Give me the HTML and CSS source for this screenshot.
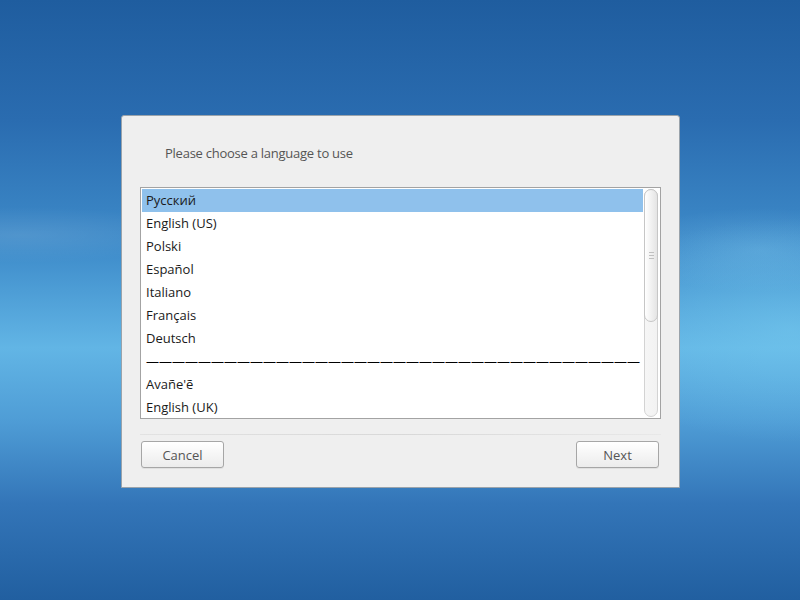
FILE: index.html
```html
<!DOCTYPE html>
<html lang="en">
<head>
  <meta charset="UTF-8">
  <title>Language</title>
  <link rel="stylesheet" href="styles.css">
</head>
<body>

<div class="desktop">
  <div class="dialog">
    <p class="prompt">Please choose a language to use</p>

    <div class="listbox">
      <ul class="items">
        <li class="selected">Русский</li>
        <li>English (US)</li>
        <li>Polski</li>
        <li>Español</li>
        <li>Italiano</li>
        <li>Français</li>
        <li>Deutsch</li>
        <li class="divider">——————————————————————————————————————</li>
        <li>Avañe'ẽ</li>
        <li>English (UK)</li>
      </ul>
      <div class="scrollbar">
        <div class="thumb"><span class="grip"></span></div>
      </div>
    </div>

    <div class="separator"></div>

    <div class="buttons">
      <button class="btn">Cancel</button>
      <button class="btn">Next</button>
    </div>
  </div>
</div>

</body>
</html>
```

FILE: styles.css
```css
/* desktop */
body {
  margin: 0;
  font-family: "Open Sans", "DejaVu Sans", sans-serif;
  font-size: 13px;
}

.desktop {
  width: 800px;
  height: 600px;
  overflow: hidden;
  display: flex;
  align-items: flex-start;
  background:
    radial-gradient(ellipse 260px 40px at 20px 235px, rgba(255, 255, 255, 0.10), transparent 70%),
    radial-gradient(ellipse 300px 160px at 790px 330px, rgba(120, 205, 240, 0.5), transparent 70%),
    radial-gradient(ellipse 200px 60px at 760px 250px, rgba(150, 215, 245, 0.25), transparent 70%),
    linear-gradient(180deg, #1f5d9f 0%, #2a6cb0 20%, #3f8dcb 42%, #62b5e5 58%, #4f9dd6 70%, #3375b8 84%, #215fa0 100%);
}

/* dialog window */
.dialog {
  margin: 115px 0 0 121px;
  width: 559px;
  height: 373px;
  background-color: #efefef;
  border: 1px solid #9aa3ab;
  border-radius: 3px 3px 0 0;
  box-sizing: border-box;
  padding: 0 18px;
}

.prompt {
  margin: 28px 0 0 25px;
  height: 18px;
  line-height: 18px;
  color: #555;
  letter-spacing: -0.25px;
}

/* list of languages */
.listbox {
  margin-top: 25px;
  height: 232px;
  box-sizing: border-box;
  border: 1px solid #a3a3a3;
  background-color: white;
  display: flex;
  padding: 1px;
}
.items {
  flex: 1;
  list-style: none;
  margin: 0;
  padding: 0;
  overflow: hidden;
}
.items li {
  height: 23px;
  line-height: 23px;
  padding-left: 4px;
  color: #1a1a1a;
  white-space: nowrap;
}
.items li.selected {
  background-color: #8fc1ec;
  margin-right: 1px;
}
.items li.divider {
  color: #000;
}

.scrollbar {
  width: 14px;
  margin-right: 1px;
  border: 1px solid #d3d3d3;
  border-radius: 7px;
  box-sizing: border-box;
  background: linear-gradient(90deg, #f6f6f6, #f2f2f2);
}
.thumb {
  height: 131px;
  margin: -1px;
  border: 1px solid #c6c6c6;
  border-radius: 7px;
  background: linear-gradient(90deg, #ffffff, #e4e4e4);
  display: flex;
  justify-content: center;
  align-items: center;
}
.grip {
  width: 5px;
  height: 5px;
  border-top: 1px solid #c0c0c0;
  border-bottom: 1px solid #c0c0c0;
  position: relative;
}
.grip::after {
  content: '';
  position: absolute;
  left: 0;
  right: 0;
  top: 2px;
  border-top: 1px solid #c0c0c0;
}

.separator {
  margin-top: 15px;
  height: 1px;
  background: linear-gradient(90deg, #e2e2e2, #d8d8d8 50%, #e8e8e8);
}

/* bottom buttons */
.buttons {
  margin-top: 6px;
  display: flex;
  justify-content: space-between;
  padding: 0 2px 0 1px;
}
.btn {
  width: 83px;
  height: 27px;
  font-family: inherit;
  font-size: 13px;
  color: #555;
  border: 1px solid #a6a6a6;
  border-radius: 3px;
  background: linear-gradient(180deg, #ffffff, #ececec);
  box-shadow: 0 1px 0 rgba(0, 0, 0, 0.06);
  padding: 0;
}
```
